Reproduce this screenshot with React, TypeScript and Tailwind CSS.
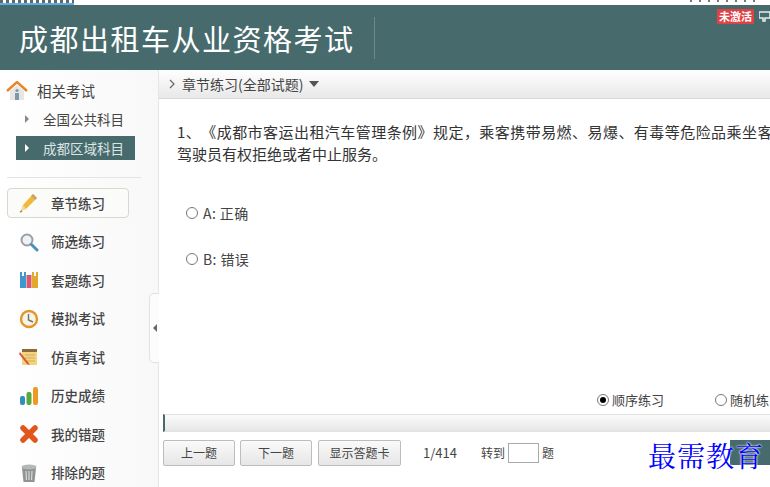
const font = "font-['Noto_Sans_CJK_SC','Microsoft_YaHei',sans-serif]";

function HouseIcon() {
  return (
    <svg width="22" height="20" viewBox="0 0 22 20">
      <path d="M4 10 L11 4 L18 10 V19 H4 Z" fill="#e6e6e2" />
      <path d="M1 10 L11 1 L21 10" fill="none" stroke="#e8842c" strokeWidth="2.4" />
      <rect x="9" y="12" width="4" height="7" fill="#7d98a8" />
      <circle cx="11" cy="9.5" r="1.6" fill="#7d98a8" />
    </svg>
  );
}

function PencilIcon() {
  return (
    <svg width="20" height="20" viewBox="0 0 20 20">
      <path d="M14 1 L18 5 L7 16 L2 18 L4 12 Z" fill="#f0b93c" />
      <path d="M14 1 L18 5 L16 7 L12 3 Z" fill="#c9a46a" />
      <path d="M4 12 L7 16 L2 18 Z" fill="#f2d9a8" />
      <path d="M1 19 L3 18" stroke="#b48a3c" strokeWidth="1.5" />
    </svg>
  );
}

function SearchIcon() {
  return (
    <svg width="20" height="20" viewBox="0 0 20 20">
      <circle cx="8" cy="8" r="5.5" fill="#eef2f4" stroke="#9a9fa3" strokeWidth="2" />
      <path d="M12.5 12.5 L18 18" stroke="#4c8fc0" strokeWidth="3" strokeLinecap="round" />
    </svg>
  );
}

function BooksIcon() {
  return (
    <svg width="20" height="20" viewBox="0 0 20 20">
      <path d="M1 2 H7 V18 H1 Z" fill="#3f97cf" />
      <rect x="7.5" y="5" width="5" height="13" fill="#d8596b" />
      <rect x="13" y="2" width="6" height="16" fill="#e3a92f" />
      <rect x="3" y="1" width="2" height="5" fill="#ffffff" />
      <rect x="15" y="1" width="2" height="5" fill="#ffffff" />
    </svg>
  );
}

function ClockIcon() {
  return (
    <svg width="20" height="20" viewBox="0 0 20 20">
      <circle cx="10" cy="10" r="8" fill="#f7f3e8" stroke="#e2962c" strokeWidth="2.4" />
      <path d="M9.5 5 V11 L14 13" fill="none" stroke="#77706a" strokeWidth="1.4" />
    </svg>
  );
}

function NotepadIcon() {
  return (
    <svg width="20" height="20" viewBox="0 0 20 20">
      <rect x="3" y="2" width="15" height="16" fill="#f3d37e" />
      <path d="M3 2 H18 V5 H3 Z" fill="#8a6b3c" />
      <path d="M6 8 H16 M6 11 H16 M6 14 H16" stroke="#d9ae56" strokeWidth="1" />
      <path d="M1 5 L9 15 L11 18 L8 17 L0 7 Z" fill="#d9573f" />
    </svg>
  );
}

function BarsIcon() {
  return (
    <svg width="20" height="20" viewBox="0 0 20 20">
      <rect x="1" y="10" width="5" height="9" rx="2" fill="#2f8fc2" />
      <rect x="7.5" y="6" width="5" height="13" rx="2" fill="#58a83e" />
      <rect x="14" y="1" width="5" height="18" rx="2" fill="#ec9a22" />
    </svg>
  );
}

function CrossIcon() {
  return (
    <svg width="20" height="20" viewBox="0 0 20 20">
      <path d="M4 4 L16 16 M16 4 L4 16" stroke="#e0561c" strokeWidth="5.5" strokeLinecap="round" />
    </svg>
  );
}

function TrashIcon() {
  return (
    <svg width="20" height="20" viewBox="0 0 20 20">
      <path d="M3 5 H17 L15.5 19 H4.5 Z" fill="#8f9392" />
      <ellipse cx="10" cy="4" rx="7.5" ry="2.5" fill="#b5b8b6" />
      <path d="M7 8 L7.5 17 M10 8 V17 M13 8 L12.5 17" stroke="#d8dad8" strokeWidth="1.2" />
    </svg>
  );
}

const menu = [
  { label: "章节练习", icon: <PencilIcon />, active: true },
  { label: "筛选练习", icon: <SearchIcon /> },
  { label: "套题练习", icon: <BooksIcon /> },
  { label: "模拟考试", icon: <ClockIcon /> },
  { label: "仿真考试", icon: <NotepadIcon /> },
  { label: "历史成绩", icon: <BarsIcon /> },
  { label: "我的错题", icon: <CrossIcon /> },
  { label: "排除的题", icon: <TrashIcon /> },
];

function Radio({ checked }: { checked?: boolean }) {
  return (
    <span className="flex h-[12px] w-[12px] items-center justify-center rounded-full border border-[#777] bg-white">
      {checked && <span className="h-[6px] w-[6px] rounded-full bg-black" />}
    </span>
  );
}

function Btn({ label, width }: { label: string; width: string }) {
  return (
    <button className={`h-[26px] ${width} rounded-[2px] border border-[#bdbdbd] bg-gradient-to-b from-[#fafafa] to-[#e6e6e6] text-[12px] text-[#444]`}>
      {label}
    </button>
  );
}

export default function App() {
  return (
    <div className={`relative flex h-[487px] w-[770px] flex-col overflow-hidden bg-white text-[#333] ${font}`}>
      <div className="flex h-[5px] shrink-0 items-start justify-between">
        <div className="h-[5px] w-[74px] border-b-2 border-[#5aaee8] bg-[repeating-linear-gradient(90deg,#666_0,#666_3px,#fff_3px,#fff_6px)]" />
        <div className="mr-[15px] h-[2px] w-[65px] bg-[repeating-linear-gradient(90deg,#777_0,#777_2px,#fff_2px,#fff_9px)]" />
      </div>

      <header className="flex h-[65px] shrink-0 items-center justify-between bg-[#476b6d]">
        <div className="flex items-center">
          <h1 className="ml-[19px] text-[29px] leading-[40px] tracking-[1.5px] whitespace-nowrap text-white">成都出租车从业资格考试</h1>
          <div className="ml-[19px] h-[42px] w-px bg-[#6d8a8b]" />
        </div>
        <div className="mb-[43px] flex items-center gap-[5px]">
          <span className="flex h-[15px] w-[37px] items-center justify-center bg-[#e04146] text-[11px] leading-none font-bold text-white">未激活</span>
          <svg width="11" height="11" viewBox="0 0 11 11">
            <path d="M0 1 H11 V7 H6 V10 H4 V7 H0 Z" fill="none" stroke="#e4ecec" strokeWidth="1.6" />
          </svg>
        </div>
      </header>

      <div className="flex min-h-0 flex-1">
        <aside className="relative w-[159px] shrink-0 border-r border-[#e6e6e6] bg-gradient-to-r from-white to-[#f8f8f8]">
          <div className="mt-[11px] ml-[6px] flex h-[20px] items-center gap-[9px]">
            <HouseIcon />
            <span className="text-[14.5px] text-[#444]">相关考试</span>
          </div>
          <div className="mt-[6px] ml-[16px] flex h-[24px] w-[119px] items-center text-[13.5px] text-[#444]">
            <span className="ml-[9px] h-0 w-0 border-y-[4px] border-l-[4px] border-y-transparent border-l-[#888]" />
            <span className="ml-[14px]">全国公共科目</span>
          </div>
          <div className="mt-[5px] ml-[16px] flex h-[24px] w-[119px] items-center bg-[#476b6d] text-[13.5px] text-[#dbe5e5]">
            <span className="ml-[9px] h-0 w-0 border-y-[4px] border-l-[4px] border-y-transparent border-l-white" />
            <span className="ml-[14px]">成都区域科目</span>
          </div>
          <div className="mt-[17px] ml-[7px] h-px w-[134px] bg-[#e4e4e4]" />

          <nav className="mt-[10px] ml-[7px] flex w-[122px] flex-col gap-[8.5px]">
            {menu.map((item) => (
              <div
                key={item.label}
                className={`flex h-[30px] items-center rounded-[4px] border ${item.active ? "border-[#d8d8d0] bg-[#fbfbf9]" : "border-transparent"}`}
              >
                <span className="ml-[11px] flex w-[20px] justify-center">{item.icon}</span>
                <span className="ml-[12px] text-[13.5px] font-medium text-[#444]">{item.label}</span>
              </div>
            ))}
          </nav>

          <div className="absolute top-[223px] right-[-1px] flex h-[70px] w-[10px] items-center justify-center rounded-l-[5px] border border-r-0 border-[#e2e2e2] bg-[#fcfcfc]">
            <span className="h-0 w-0 border-y-[4px] border-r-[4px] border-y-transparent border-r-[#666]" />
          </div>
        </aside>

        <main className="flex min-w-0 flex-1 flex-col">
          <div className="flex h-[29px] shrink-0 items-center border-b border-[#d9d9d9] bg-gradient-to-b from-white to-[#e8e8e8] text-[14px] text-[#444]">
            <svg className="ml-[10px]" width="6" height="10" viewBox="0 0 6 10">
              <path d="M1 1 L5 5 L1 9" fill="none" stroke="#666" strokeWidth="1.2" />
            </svg>
            <span className="ml-[7px]">章节练习(全部试题)</span>
            <span className="ml-[6px] h-0 w-0 border-x-[5px] border-t-[6px] border-x-transparent border-t-[#555]" />
          </div>

          <div className="mt-[22px] ml-[18px] text-[15px] leading-[22px] whitespace-nowrap text-[#333] [text-spacing-trim:space-all]">
            <p className="tracking-[0.45px]">1、《成都市客运出租汽车管理条例》规定，乘客携带易燃、易爆、有毒等危险品乘坐客</p>
            <p>驾驶员有权拒绝或者中止服务。</p>
          </div>

          <div className="mt-[38px] ml-[27px] flex items-center gap-[5px] text-[14px] leading-[20px] tracking-[0.4px] text-[#444]">
            <Radio /> <span>A: 正确</span>
          </div>
          <div className="mt-[26px] ml-[27px] flex items-center gap-[5px] text-[14px] leading-[20px] tracking-[0.4px] text-[#444]">
            <Radio /> <span>B: 错误</span>
          </div>

          <div className="mt-[122px] ml-[438px] flex h-[18px] items-center text-[13px] whitespace-nowrap text-[#444]">
            <Radio checked />
            <span className="ml-[3px]">顺序练习</span>
            <span className="ml-[51px]"><Radio /></span>
            <span className="ml-[3px]">随机练</span>
          </div>

          <div className="mt-[5px] ml-[4px] h-[18px] shrink-0 border-y border-l-2 border-y-[#e2e2e2] border-l-[#476b6d] bg-gradient-to-b from-[#fbfbfb] to-[#e6e6e6]" />

          <div className="mt-[8px] ml-[4px] flex items-center text-[13px] text-[#444]">
            <Btn label="上一题" width="w-[72px]" />
            <span className="ml-[5px]"><Btn label="下一题" width="w-[72px]" /></span>
            <span className="ml-[6px]"><Btn label="显示答题卡" width="w-[83px]" /></span>
            <span className="ml-[22px]">1/414</span>
            <span className="ml-[24px] text-[12px]">转到</span>
            <span className="ml-[3px] h-[20px] w-[31px] border border-[#aaa] bg-white" />
            <span className="ml-[3px] text-[12px]">题</span>
          </div>
        </main>
      </div>

      <div className="absolute top-[440px] left-[730px] h-[25px] w-[40px] bg-[#476b6d]" />
      <div className="absolute top-[437px] left-[648px] text-[28px] leading-[36px] tracking-[1px] whitespace-nowrap text-[#0000ff] [text-shadow:0_0_2px_#fff,0_0_2px_#fff] font-['Noto_Serif_CJK_SC','Noto_Sans_CJK_SC',serif]">
        最需教育
      </div>
    </div>
  );
}
